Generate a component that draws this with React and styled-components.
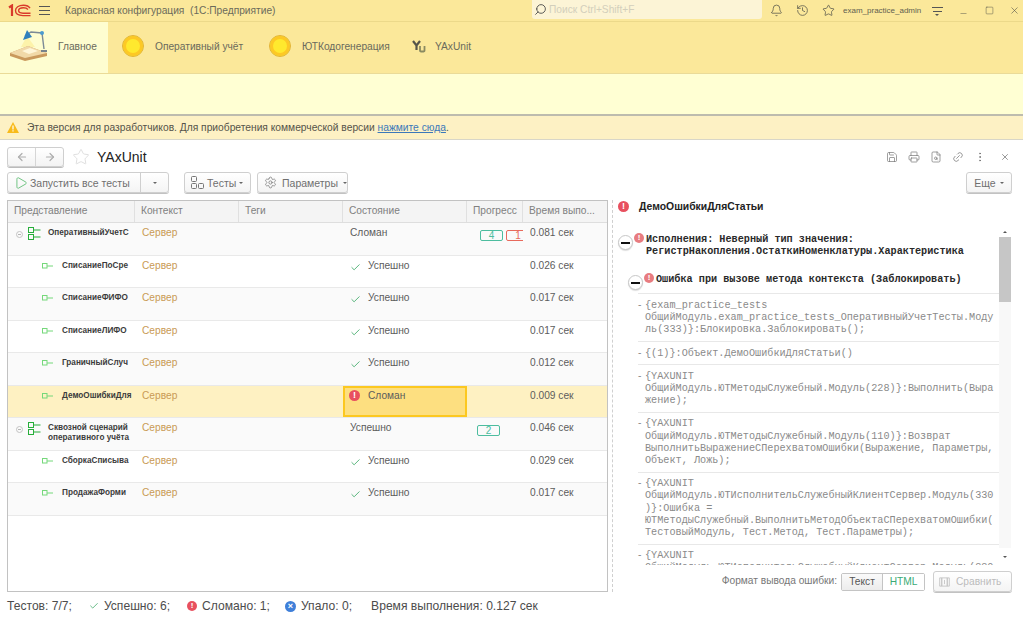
import React from 'react';
import styled, { createGlobalStyle } from 'styled-components';
import {
  ArrowLeft, ArrowRight, Bell, Check, History, Link2, Minus, MoreVertical, Printer, Play,
  Save, Search, Settings, Square, Star, X, FileSearch,
} from 'lucide-react';

const GlobalStyle = createGlobalStyle`
  html, body { margin: 0; padding: 0; background: #fff; }
  body { font-family: "Liberation Sans", Arial, sans-serif; color: #4a4a4a; overflow: hidden; }
  * { box-sizing: border-box; }
`;

const Page = styled.div`
  width: 1023px;
  height: 621px;
  display: flex;
  flex-direction: column;
  overflow: hidden;
`;

/* ---- title bar ---- */
const TitleBar = styled.div`
  height: 22px;
  flex: none;
  display: flex;
  align-items: center;
  background: #fbe89a;
  border-bottom: 1px solid #ecd98a;
`;
const LogoBox = styled.div`
  width: 39px;
  flex: none;
  padding-left: 8px;
  display: flex;
  align-items: center;
`;
const Burger = styled.div`
  width: 11px;
  height: 9px;
  flex: none;
  border-top: 1px solid #555;
  border-bottom: 1px solid #555;
  position: relative;
  &::after {
    content: '';
    position: absolute;
    left: 0;
    right: 0;
    top: 3px;
    border-top: 1px solid #555;
  }
`;
const AppTitle = styled.div`
  margin-left: 15px;
  width: 467px;
  font-size: 10.2px;
  color: #6b6b5a;
  white-space: pre;
  flex: none;
`;
const SearchBox = styled.div`
  width: 230px;
  height: 19px;
  flex: none;
  align-self: flex-start;
  background: #fcf4d6;
  border-radius: 0 0 3px 3px;
  display: flex;
  align-items: center;
  padding-left: 2px;
  gap: 2px;
  font-size: 10.2px;
  color: #d3cfbc;
  svg { transform: scaleX(-1); }
`;
const TitleIcons = styled.div`
  margin-left: 1px;
  display: flex;
  align-items: center;
  color: #55554a;
`;
const TitleIcon = styled.div`
  width: ${p => p.$w}px;
  flex: none;
  display: flex;
  justify-content: center;
`;
const UserName = styled.div`
  font-size: 8px;
  width: 85px;
  flex: none;
  padding-left: 3px;
  color: #5f5f50;
  white-space: nowrap;
`;
const MenuLines = styled.div`
  width: 11px;
  height: 8px;
  border-top: 1px solid #555;
  position: relative;
  &::before {
    content: '';
    position: absolute;
    left: 1px;
    right: 1px;
    top: 3px;
    border-top: 1px solid #555;
  }
  &::after {
    content: '';
    position: absolute;
    left: 3px;
    top: 6px;
    border: 2.5px solid transparent;
    border-top-color: #555;
  }
`;

/* ---- sections panel ---- */
const Sections = styled.div`
  height: 52px;
  flex: none;
  display: flex;
  background: #fbe89a;
  border-bottom: 1px solid #eadb98;
`;
const Section = styled.div`
  display: flex;
  align-items: center;
  width: ${p => p.$w}px;
  padding-left: ${p => p.$pad}px;
  gap: ${p => p.$gap}px;
  font-size: 10.2px;
  color: #6a6a5c;
  background: ${p => (p.$active ? '#fefdd0' : 'transparent')};
  padding-bottom: 3px;
`;
const Coin = styled.div`
  width: 22px;
  height: 22px;
  border-radius: 50%;
  background: #ffe92e;
  border: 1px solid #e3b43a;
  box-shadow: inset 0 0 0 3px #fdc825;
  flex: none;
`;

const FunctionPanel = styled.div`
  height: 42px;
  flex: none;
  background: #ffffd3;
  border-bottom: 2px solid #bdbcae;
`;
const Notice = styled.div`
  height: 24px;
  flex: none;
  display: flex;
  align-items: center;
  gap: 8px;
  padding-left: 7px;
  background: #fdf1c4;
  border-bottom: 1px solid #d8d6c8;
  font-size: 10.25px;
  color: #55534a;
  a { color: #3b78ba; text-decoration: underline; }
`;

/* ---- form ---- */
const Form = styled.div`
  flex: 1;
  display: flex;
  flex-direction: column;
  padding: 7px 11px 0 7px;
  min-height: 0;
`;
const FormHead = styled.div`
  height: 20px;
  display: flex;
  align-items: center;
`;
const NavGroup = styled.div`
  display: flex;
  width: 57px;
  height: 20px;
  border: 1px solid #cfcfcf;
  border-radius: 3px;
  background: linear-gradient(#fff, #f3f3f3);
  box-shadow: 0 1px 0 #bbb;
`;
const NavBtn = styled.div`
  flex: 1;
  display: flex;
  align-items: center;
  justify-content: center;
  color: #adadad;
  & + & { border-left: 1px solid #d6d6d6; }
`;
const FavStar = styled.div`
  margin-left: 8px;
  color: #d4d4d4;
  display: flex;
`;
const FormTitle = styled.div`
  margin-left: 7px;
  font-size: 14px;
  color: #222;
`;
const HeadTools = styled.div`
  margin-left: auto;
  display: flex;
  align-items: center;
  gap: 10px;
  color: #777;
  margin-right: 2px;
`;
const CloseMark = styled.div`
  margin-left: 4px;
  display: flex;
  color: #666;
`;
const Toolbar = styled.div`
  margin-top: 5px;
  height: 22px;
  display: flex;
  align-items: flex-start;
`;
const Btn = styled.div`
  height: 21px;
  width: ${p => (p.$w ? `${p.$w}px` : 'auto')};
  margin-left: ${p => p.$ml || 0}px;
  flex: none;
  display: flex;
  align-items: center;
  justify-content: ${p => (p.$center ? 'center' : 'flex-start')};
  gap: ${p => p.$gap || 5}px;
  padding: 0 ${p => (p.$center ? 0 : 6)}px;
  font-size: 10.5px;
  color: #6f6f6f;
  border: 1px solid #cfcfcf;
  border-radius: 3px;
  background: linear-gradient(#fff, #f4f4f4);
  box-shadow: 0 1px 0 #c2c2c2;
  white-space: nowrap;
  svg { flex: none; }
`;
const Caret = styled.span`
  width: 0;
  height: 0;
  border: 2.5px solid transparent;
  border-top-color: #666;
  margin-top: 3px;
  flex: none;
`;
const RunSplit = styled.div`
  margin-left: auto;
  width: 28px;
  height: 19px;
  margin-right: -6px;
  border-left: 1px solid #cfcfcf;
  display: flex;
  align-items: center;
  justify-content: center;
`;

const Split = styled.div`
  margin-top: 6px;
  display: grid;
  grid-template-columns: 601px 400px;
  column-gap: 4px;
  height: 392px;
`;

/* ---- test table ---- */
const COLUMNS = '127px 104px 104px 124px 56px 84px';
const Table = styled.div`
  border: 1px solid #c2c2c2;
  overflow: hidden;
  background: #fff;
`;
const HeadRow = styled.div`
  display: grid;
  grid-template-columns: ${COLUMNS};
  height: 22px;
  background: #f4f4f4;
  border-bottom: 1px solid #dedede;
`;
const HeadCell = styled.div`
  font-size: 10.2px;
  color: #808080;
  padding: 4px 0 0 6px;
  border-right: 1px solid #e0e0e0;
  white-space: nowrap;
  overflow: hidden;
  &:last-child { border-right: none; }
`;
const Row = styled.div`
  display: grid;
  grid-template-columns: ${COLUMNS};
  height: 32.5px;
  background: ${p => (p.$selected ? '#fef1c2' : p.$even ? '#fff' : '#fafafa')};
  border-bottom: 1px solid #e9e9e9;
`;
const Cell = styled.div`
  min-width: 0;
  overflow: hidden;
  padding: 4px 0 0 7px;
  font-size: 10.2px;
  color: #5c5c5c;
  white-space: nowrap;
`;
const NameCell = styled(Cell)`
  display: flex;
  align-items: flex-start;
  padding: ${p => (p.$group ? '4px 0 0 8px' : '5px 0 0 34px')};
  gap: ${p => (p.$group ? 3 : 8)}px;
`;
const Name = styled.div`
  font-size: 8.2px;
  line-height: 10px;
  font-weight: 700;
  color: #3c3c3c;
  white-space: normal;
  margin-top: ${p => (p.$group ? 1 : 0)}px;
  margin-left: ${p => (p.$group ? 4 : 0)}px;
`;
const ContextCell = styled(Cell)`
  color: #c99a55;
`;
const StatusCell = styled(Cell)`
  display: flex;
  align-items: flex-start;
  gap: 7px;
  ${p => p.$selected && `
    background: #fddf80;
    border: 2px solid #fcc820;
    padding: 2px 0 0 4px;
    gap: 8px;
  `}
`;
const ProgressCell = styled(Cell)`
  display: flex;
  gap: 3px;
  padding: 7px 0 0 ${p => p.$pad}px;
`;
const Badge = styled.div`
  flex: none;
  width: ${p => p.$w}px;
  height: 11px;
  border: 1.5px solid ${p => p.$color};
  border-radius: 2px;
  color: ${p => p.$color};
  font-size: 10px;
  line-height: 9px;
  text-align: center;
`;
const Toggle = styled.div`
  width: 7px;
  height: 7px;
  margin-top: 4px;
  margin-right: 2px;
  border: 1px solid #c4c4c4;
  border-radius: 50%;
  flex: none;
  position: relative;
  &::after {
    content: '';
    position: absolute;
    left: 1px;
    right: 1px;
    top: 2px;
    border-top: 1px solid #b5b5b5;
  }
`;
const ErrorDot = styled.span`
  width: ${p => p.$size || 11}px;
  height: ${p => p.$size || 11}px;
  border-radius: 50%;
  background: ${p => p.$color || '#e8505f'};
  color: #fff;
  font-size: ${p => (p.$size || 11) - 2}px;
  font-weight: 700;
  line-height: ${p => p.$size || 11}px;
  text-align: center;
  flex: none;
  display: inline-block;
  font-family: "Liberation Sans", Arial, sans-serif;
`;

/* ---- error panel ---- */
const Details = styled.div`
  border-left: 1px dashed #cfcfcf;
  display: flex;
  flex-direction: column;
`;
const DetailsTitle = styled.div`
  height: 28px;
  flex: none;
  display: flex;
  align-items: center;
  gap: 10px;
  padding: 0 0 16px 5px;
  font-size: 10.4px;
  color: #222;
`;
const Viewer = styled.div`
  height: 337px;
  flex: none;
  display: flex;
  font-family: "Liberation Mono", "Courier New", monospace;
  font-size: 10.2px;
  line-height: 12.2px;
`;
const ViewerText = styled.div`
  flex: 1;
  min-width: 0;
  overflow: hidden;
  padding-top: 6px;
`;
const ErrorHead = styled.div`
  display: flex;
  align-items: flex-start;
  padding-left: ${p => p.$pad}px;
  margin-bottom: ${p => p.$mb}px;
  font-weight: 700;
  color: #2a2a2a;
`;
const MinusCircle = styled.div`
  width: 15px;
  height: 15px;
  margin-top: 1px;
  flex: none;
  border: 1px solid #c8c8c8;
  border-radius: 50%;
  background: #fff;
  position: relative;
  box-shadow: 0 1px 1px #ddd;
  &::after {
    content: '';
    position: absolute;
    left: 2px;
    right: 2px;
    top: 6px;
    border-top: 2px solid #111;
  }
`;
const HeadDot = styled.div`
  flex: none;
  margin: -1px 2px 0 1px;
  display: flex;
`;
const Stack = styled.div`
  margin-left: 25px;
  width: 361px;
  border-top: 1px solid #e8e8e8;
`;
const StackItem = styled.div`
  padding: 4.5px 3px 4.5px 7px;
  border-bottom: 1px solid #e8e8e8;
  color: #8a8a8a;
  text-indent: -7px;
  overflow-wrap: anywhere;
`;
const Dash = styled.span`
  display: inline-block;
  width: 7px;
  text-indent: 0;
  font-family: "Liberation Sans", Arial, sans-serif;
`;
const ScrollBar = styled.div`
  width: 12px;
  flex: none;
  margin-right: 1px;
  display: flex;
  flex-direction: column;
  align-items: stretch;
  color: #555;
`;
const ScrollArrow = styled.div`
  height: ${p => p.$h}px;
  flex: none;
  display: flex;
  justify-content: center;
  align-items: center;
  &::before {
    content: '';
    width: 0;
    height: 0;
    border: 2.5px solid transparent;
    ${p => (p.$up ? 'border-bottom-color: #555; margin-top: -3px;' : 'border-top-color: #555; margin-top: 3px;')}
  }
`;
const ScrollTrack = styled.div`
  flex: 1;
  background: #f8f8f8;
`;
const ScrollThumb = styled.div`
  height: 65px;
  background: #c6c6c6;
`;
const FormatBar = styled.div`
  flex: 1;
  display: flex;
  align-items: flex-start;
  justify-content: flex-end;
  padding-top: 6px;
  font-size: 10.2px;
  color: #777;
`;
const FormatLabel = styled.div`
  margin: 4px 4px 0 0;
`;
const Segments = styled.div`
  display: flex;
  height: 18px;
  margin-top: 2px;
  border: 1px solid #c4c4c4;
  border-radius: 2px;
  margin-right: 8px;
`;
const Segment = styled.div`
  width: ${p => p.$w}px;
  text-align: center;
  line-height: 16px;
  background: ${p => (p.$active ? 'linear-gradient(#fafafa, #ececec)' : '#fff')};
  color: ${p => (p.$active ? '#555' : '#3bab76')};
  & + & { border-left: 1px solid #c4c4c4; }
`;
const DisabledBtn = styled(Btn)`
  color: #bcbcbc;
  padding: 0 0 0 5px;
  gap: 6px;
  font-size: 10.2px;
`;

/* ---- totals ---- */
const Totals = styled.div`
  margin-top: 7px;
  display: flex;
  align-items: center;
  font-size: 12.1px;
  color: #4c4c4c;
  white-space: nowrap;
`;
const Total = styled.div`
  display: flex;
  align-items: center;
  gap: 5px;
  margin-left: ${p => p.$ml || 0}px;
`;

const Logo = () => (
  <svg width="23" height="13" viewBox="0 0 23 13" fill="none">
    <path d="M1 3.5 4 1.5V12" stroke="#d93a2b" strokeWidth="2.2" />
    <path d="M22 4.2C21 2.4 19 1.2 15.5 1.2C10.5 1.2 7.5 3.6 7.5 6.6C7.5 9.6 10.5 11.6 15 11.6H22.5" stroke="#d93a2b" strokeWidth="1.4" />
    <path d="M20 5.4C19 4.4 17.6 3.8 15.5 3.8C12.5 3.8 10.6 5 10.6 6.6C10.6 8.2 12.5 9.2 15 9.2H22.5" stroke="#d93a2b" strokeWidth="1.4" />
  </svg>
);

const DeskIcon = () => (
  <svg width="40" height="34" viewBox="0 0 40 34" fill="none">
    <path d="M18 7 12 18H26Z" fill="#fdf0a0" opacity="0.8" />
    <path d="M1 24 19 17 38 24 38 27 16 32 1 27Z" fill="#c9995c" />
    <path d="M1 24 19 17 38 24 16 29Z" fill="#f1d9a8" />
    <path d="M13 22 21 19 29 22 20 25Z" fill="#fff6d8" />
    <path d="M16 7 22 3 33 4 35 20" stroke="#7c8a96" strokeWidth="1.4" />
    <path d="M14 11 18 1 23 8Z" fill="#2f80bd" />
    <circle cx="33" cy="4" r="2" fill="#4b9bd0" />
    <path d="M32 21h6v2h-6z" fill="#77838c" />
  </svg>
);

const YuIcon = () => (
  <svg width="14" height="13" viewBox="0 0 14 13" fill="none">
    <path d="M1 1 4.5 5.5 8 1 M4.5 5.5V10" stroke="#55554a" strokeWidth="2.2" />
    <path d="M8 6v4.5C8 12 12.5 12 12.5 10.5V6" stroke="#8a8a60" strokeWidth="1.8" />
  </svg>
);

const Warning = () => (
  <svg width="12" height="11" viewBox="0 0 12 11">
    <path d="M6 0 12 11H0Z" fill="#f8bb1c" />
    <path d="M5.4 3.5h1.2v4H5.4z M5.4 8.2h1.2v1.2H5.4z" fill="#fff" />
  </svg>
);

const GroupIcon = () => (
  <svg width="13" height="13" viewBox="0 0 13 13" fill="none" style={{ flex: 'none' }}>
    <rect x="0.5" y="0.5" width="5" height="5" stroke="#27ae3a" />
    <rect x="0.5" y="7.5" width="5" height="5" stroke="#27ae3a" />
    <path d="M6 3h6.5M6 10h6.5" stroke="#27ae3a" />
  </svg>
);

const TestIcon = () => (
  <svg width="12" height="6" viewBox="0 0 12 6" fill="none" style={{ flex: 'none', marginTop: 2 }}>
    <rect x="0.5" y="0.5" width="4.5" height="4.5" stroke="#75d87a" />
    <path d="M5 3h6" stroke="#75d87a" />
  </svg>
);

const ModulesIcon = () => (
  <svg width="13" height="13" viewBox="0 0 13 13" fill="none" stroke="#777">
    <rect x="0.5" y="0.5" width="5" height="5" rx="1" />
    <rect x="0.5" y="7.5" width="5" height="5" rx="1" />
    <rect x="7.5" y="7.5" width="5" height="5" rx="1" />
  </svg>
);

const CompareIcon = () => (
  <svg width="11" height="12" viewBox="0 0 16 16" fill="none" stroke="#c4c4c4" strokeWidth="1.3">
    <path d="M4 2h8v12H4z M1 2h3v12H1z M12 2h3v12h-3z" />
    <path d="M8 5v6" />
  </svg>
);

const PASSED = <Check size={11} color="#4caf72" strokeWidth={2} style={{ flex: 'none', marginTop: 2 }} />;

const TESTS = [
  { name: 'ОперативныйУчетС', group: true, status: 'Сломан', badges: [['4', '#4dbd9f', 23], ['1', '#e86a5c', 24]], pad: 13, time: '0.081 сек' },
  { name: 'СписаниеПоСре', status: 'Успешно', icon: PASSED, time: '0.026 сек' },
  { name: 'СписаниеФИФО', status: 'Успешно', icon: PASSED, time: '0.017 сек' },
  { name: 'СписаниеЛИФО', status: 'Успешно', icon: PASSED, time: '0.017 сек' },
  { name: 'ГраничныйСлуч', status: 'Успешно', icon: PASSED, time: '0.012 сек' },
  { name: 'ДемоОшибкиДля', status: 'Сломан', icon: <ErrorDot $size={11}>!</ErrorDot>, selected: true, time: '0.009 сек' },
  { name: 'Сквозной сценарий оперативного учёта', group: true, status: 'Успешно', badges: [['2', '#4dbd9f', 23]], pad: 10, time: '0.046 сек' },
  { name: 'СборкаСписыва', status: 'Успешно', icon: PASSED, time: '0.029 сек' },
  { name: 'ПродажаФорми', status: 'Успешно', icon: PASSED, time: '0.017 сек' },
];

const STACK = [
  '{exam_practice_tests ОбщийМодуль.exam_practice_tests_ОперативныйУчетТесты.Модуль(333)}:Блокировка.Заблокировать();',
  '{(1)}:Объект.ДемоОшибкиДляСтатьи()',
  '{YAXUNIT ОбщийМодуль.ЮТМетодыСлужебный.Модуль(228)}:Выполнить(Выражение);',
  '{YAXUNIT ОбщийМодуль.ЮТМетодыСлужебный.Модуль(110)}:Возврат ВыполнитьВыражениеСПерехватомОшибки(Выражение, Параметры, Объект, Ложь);',
  '{YAXUNIT ОбщийМодуль.ЮТИсполнительСлужебныйКлиентСервер.Модуль(330)}:Ошибка = ЮТМетодыСлужебный.ВыполнитьМетодОбъектаСПерехватомОшибки(ТестовыйМодуль, Тест.Метод, Тест.Параметры);',
  '{YAXUNIT ОбщийМодуль.ЮТИсполнительСлужебныйКлиентСервер.Модуль(330',
];

const TestRow = ({ test, even }) => (
  <Row $even={even} $selected={test.selected}>
    <NameCell $group={test.group}>
      {test.group && <Toggle />}
      {test.group ? <GroupIcon /> : <TestIcon />}
      <Name $group={test.group}>{test.name}</Name>
    </NameCell>
    <ContextCell>Сервер</ContextCell>
    <Cell />
    <StatusCell $selected={test.selected}>
      {test.icon}
      {test.status}
    </StatusCell>
    <ProgressCell $pad={test.pad || 0}>
      {test.badges && test.badges.map(([label, color, w]) => (
        <Badge key={label} $color={color} $w={w}>{label}</Badge>
      ))}
    </ProgressCell>
    <Cell>{test.time}</Cell>
  </Row>
);

export default function App() {
  return (
    <Page>
      <GlobalStyle />
      <TitleBar>
        <LogoBox><Logo /></LogoBox>
        <Burger />
        <AppTitle>Каркасная конфигурация  (1С:Предприятие)</AppTitle>
        <SearchBox>
          <Search size={13} color="#444" strokeWidth={1.6} />
          Поиск Ctrl+Shift+F
        </SearchBox>
        <TitleIcons>
          <TitleIcon $w={26}><Bell size={13} strokeWidth={1.4} /></TitleIcon>
          <TitleIcon $w={27}><History size={13} strokeWidth={1.4} /></TitleIcon>
          <TitleIcon $w={24}><Star size={13} strokeWidth={1.4} /></TitleIcon>
          <UserName>exam_practice_admin</UserName>
          <TitleIcon $w={24}><MenuLines /></TitleIcon>
          <TitleIcon $w={28}><Minus size={9} strokeWidth={1.3} style={{ marginTop: 5 }} /></TitleIcon>
          <TitleIcon $w={24}><Square size={9} strokeWidth={1.3} /></TitleIcon>
          <TitleIcon $w={26}><X size={11} strokeWidth={1.3} /></TitleIcon>
        </TitleIcons>
      </TitleBar>

      <Sections>
        <Section $active $w={108} $pad={9} $gap={9}><DeskIcon />Главное</Section>
        <Section $w={147} $pad={14} $gap={11}><Coin />Оперативный учёт</Section>
        <Section $w={143} $pad={14} $gap={11}><Coin />ЮТКодогенерация</Section>
        <Section $w={100} $pad={14} $gap={9}><YuIcon />YAxUnit</Section>
      </Sections>
      <FunctionPanel />
      <Notice>
        <Warning />
        <span>Эта версия для разработчиков. Для приобретения коммерческой версии <a>нажмите сюда</a>.</span>
      </Notice>

      <Form>
        <FormHead>
          <NavGroup>
            <NavBtn><ArrowLeft size={12} strokeWidth={2.4} /></NavBtn>
            <NavBtn><ArrowRight size={12} strokeWidth={2.4} /></NavBtn>
          </NavGroup>
          <FavStar><Star size={18} strokeWidth={1} /></FavStar>
          <FormTitle>YAxUnit</FormTitle>
          <HeadTools>
            <Save size={12} strokeWidth={1.4} />
            <Printer size={12} strokeWidth={1.4} />
            <FileSearch size={12} strokeWidth={1.4} />
            <Link2 size={12} strokeWidth={1.4} style={{ transform: 'rotate(-45deg)' }} />
            <MoreVertical size={12} strokeWidth={1.8} />
            <CloseMark><X size={10} strokeWidth={1.6} /></CloseMark>
          </HeadTools>
        </FormHead>

        <Toolbar>
          <Btn $w={162} $gap={2}>
            <Play size={14} color="#46b35e" strokeWidth={1.3} />
            Запустить все тесты
            <RunSplit><Caret /></RunSplit>
          </Btn>
          <Btn $w={67} $ml={15} $gap={3}>
            <ModulesIcon />
            Тесты
            <Caret />
          </Btn>
          <Btn $w={91} $ml={6}>
            <Settings size={13} strokeWidth={1.3} />
            Параметры
            <Caret />
          </Btn>
          <Btn $w={46} $ml={618} $center $gap={4}>Еще<Caret /></Btn>
        </Toolbar>

        <Split>
          <Table>
            <HeadRow>
              <HeadCell>Представление</HeadCell>
              <HeadCell>Контекст</HeadCell>
              <HeadCell>Теги</HeadCell>
              <HeadCell>Состояние</HeadCell>
              <HeadCell>Прогресс</HeadCell>
              <HeadCell>Время выпо...</HeadCell>
            </HeadRow>
            {TESTS.map((test, i) => <TestRow key={test.name} test={test} even={i % 2 === 1} />)}
          </Table>

          <Details>
            <DetailsTitle>
              <ErrorDot $size={11}>!</ErrorDot>
              <b>ДемоОшибкиДляСтатьи</b>
            </DetailsTitle>
            <Viewer>
              <ViewerText>
                <ErrorHead $pad={5} $mb={16}>
                  <MinusCircle />
                  <HeadDot><ErrorDot $size={10} $color="#e87c80">!</ErrorDot></HeadDot>
                  <span>Исполнения: Неверный тип значения: РегистрНакопления.ОстаткиНоменклатуры.Характеристика</span>
                </ErrorHead>
                <ErrorHead $pad={15} $mb={3}>
                  <MinusCircle />
                  <HeadDot><ErrorDot $size={10} $color="#e87c80">!</ErrorDot></HeadDot>
                  <span>Ошибка при вызове метода контекста (Заблокировать)</span>
                </ErrorHead>
                <Stack>
                  {STACK.map(line => (
                    <StackItem key={line}><Dash>-</Dash>{line}</StackItem>
                  ))}
                </Stack>
              </ViewerText>
              <ScrollBar>
                <ScrollArrow $up $h={9} />
                <ScrollTrack><ScrollThumb /></ScrollTrack>
                <ScrollArrow $h={17} />
              </ScrollBar>
            </Viewer>
            <FormatBar>
              <FormatLabel>Формат вывода ошибки:</FormatLabel>
              <Segments>
                <Segment $active $w={40}>Текст</Segment>
                <Segment $w={42}>HTML</Segment>
              </Segments>
              <DisabledBtn $w={79}><CompareIcon />Сравнить</DisabledBtn>
            </FormatBar>
          </Details>
        </Split>

        <Totals>
          <Total>Тестов: 7/7;</Total>
          <Total $ml={17}><Check size={10} color="#4caf72" strokeWidth={2} />Успешно: 6;</Total>
          <Total $ml={17}><ErrorDot $size={10}>!</ErrorDot>Сломано: 1;</Total>
          <Total $ml={15}><ErrorDot $size={11} $color="#3f7fd9">×</ErrorDot>Упало: 0;</Total>
          <Total $ml={19}>Время выполнения: 0.127 сек</Total>
        </Totals>
      </Form>
    </Page>
  );
}
